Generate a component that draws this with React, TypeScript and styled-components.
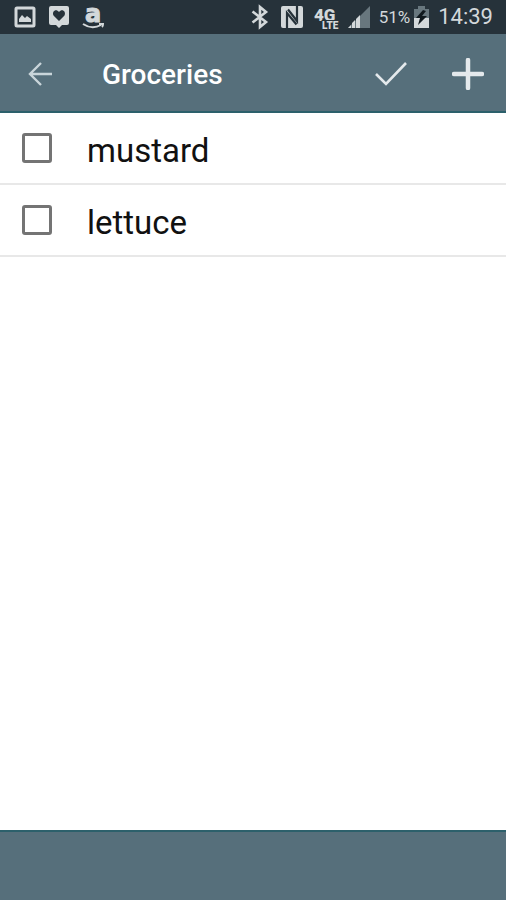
import React from 'react';
import styled, { createGlobalStyle } from 'styled-components';

const GlobalStyle = createGlobalStyle`
  * { box-sizing: border-box; }
  body { margin: 0; background: #fff; font-family: Roboto, "Liberation Sans", sans-serif; }
`;

const Screen = styled.div`
  display: flex;
  flex-direction: column;
  min-height: 100vh;
`;

const StatusBar = styled.div`
  display: flex;
  align-items: center;
  justify-content: space-between;
  height: 34px;
  padding: 0 13px 0 14px;
  background: #26323a;
  color: #d3d8da;
`;

const StatusGroup = styled.div<{ $gap: number }>`
  display: flex;
  align-items: center;
  gap: ${({ $gap }) => $gap}px;
`;

const StatusIcon = styled.svg`
  display: block;
  flex: none;
  overflow: visible;
`;

const Power = styled.div`
  display: flex;
  align-items: center;
  gap: 4px;
  font-size: 17px;
  line-height: 36px;
`;

const Clock = styled.time`
  font-size: 22px;
  line-height: 36px;
`;

const Toolbar = styled.header`
  display: flex;
  align-items: center;
  height: 79px;
  padding: 2px 14px 0 16px;
  background: #566f7b;
  border-bottom: 2px solid #2c606b;
`;

const IconButton = styled.button`
  display: grid;
  place-items: center;
  flex: none;
  width: 48px;
  height: 48px;
  padding: 0;
  border: 0;
  background: none;
  color: #e4e9ec;
  cursor: pointer;
`;

const Title = styled.h1`
  flex: 1;
  margin: 0 0 0 38px;
  padding-top: 2px;
  color: #fff;
  font-size: 28px;
  line-height: 36px;
  font-weight: 500;
`;

const Actions = styled.div`
  display: flex;
  gap: 29px;
`;

const Items = styled.ul`
  flex: 1;
  margin: 0;
  padding: 0;
  list-style: none;
  background: #fff;
`;

const Item = styled.li`
  height: 72px;
  border-bottom: 2px solid #e8e8e8;
`;

const ItemLabel = styled.label`
  display: flex;
  align-items: center;
  gap: 35px;
  height: 100%;
  padding: 0 22px;
  color: #111;
  font-size: 33px;
  line-height: 40px;
  cursor: pointer;
`;

const ItemText = styled.span`
  padding-top: 6px;
`;

const Checkbox = styled.input`
  appearance: none;
  flex: none;
  width: 30px;
  height: 30px;
  margin: 0;
  border: 3px solid #747474;
  border-radius: 3px;
  background: #fff;
  &:checked { background: #566f7b; }
`;

const Footer = styled.footer`
  height: 70px;
  background: #566f7b;
  border-top: 2px solid #2c606b;
`;

const items = ['mustard', 'lettuce'];

export default function App() {
  return (
    <>
      <GlobalStyle />
      <Screen>
        <StatusBar>
          <StatusGroup $gap={12}>
            <StatusIcon width="22" height="24" viewBox="0 0 22 24" aria-label="Picture">
              <rect x="2" y="3" width="18" height="18" rx="1" fill="none" stroke="currentColor" strokeWidth="3" />
              <path d="M5 17V14l3-4 3 3 2-2 4 3v3z" fill="currentColor" />
            </StatusIcon>
            <StatusIcon width="22" height="24" viewBox="0 0 22 24" aria-label="Favourite">
              <path d="M3 1h16a2 2 0 0 1 2 2v15a2 2 0 0 1-2 2h-5l-3 3-3-3H3a2 2 0 0 1-2-2V3a2 2 0 0 1 2-2z" fill="currentColor" />
              <path d="M11 16L5.500 10.500C3.500 6.500 8 3 11 7 14 3 18.500 6.500 16.500 10.500z" fill="#26323a" />
            </StatusIcon>
            <StatusIcon width="24" height="24" viewBox="0 0 24 24">
              <text x="11" y="17" textAnchor="middle" fontSize="24" fontWeight="700" fontFamily="DejaVu Sans" fill="currentColor" stroke="currentColor">a</text>
              <path d="M1 19q9 6 18 1M17 19h4q0 2-1 3" fill="none" stroke="currentColor" strokeWidth="2" />
            </StatusIcon>
          </StatusGroup>
          <StatusGroup $gap={9}>
            <StatusIcon width="22" height="24" viewBox="0 0 22 24" aria-label="Bluetooth">
              <path d="M3.500 6.500L17 17l-6 5V2l6 5L3.500 17.500" fill="none" stroke="currentColor" strokeWidth="2.600" />
            </StatusIcon>
            <StatusIcon width="24" height="24" viewBox="0 0 24 24" aria-label="NFC">
              <rect x="1" y="1" width="22" height="22" rx="2" fill="currentColor" />
              <path d="M7 23V8L16.500 19.500M17 1V16L8 4.500" fill="none" stroke="#26323a" strokeWidth="2.200" />
            </StatusIcon>
            <StatusIcon width="26" height="24" viewBox="0 0 26 24">
              <text x="1" y="16" fontSize="17" fontWeight="900" fontFamily="Roboto" fill="currentColor">4G</text>
              <text x="9" y="24" fontSize="10" fontWeight="900" fontFamily="Roboto" fill="currentColor" stroke="#26323a" strokeWidth="2" paintOrder="stroke">LTE</text>
            </StatusIcon>
            <StatusIcon width="22" height="24" viewBox="0 0 22 24" aria-label="Signal strength">
              <path d="M0 23L22 1v22z" fill="#68777e" />
              <path d="M0 23l3-3v3zM4 23v-5l3-3v8zM8 23v-9l4-4v13z" fill="currentColor" />
            </StatusIcon>
            <Power>
              <span>51%</span>
              <StatusIcon width="15" height="24" viewBox="0 0 15 24" aria-label="Battery charging">
                <path d="M0 4h4V1h7v3h4v19H0z" fill="#68777e" />
                <path d="M0 13h15v10H0z" fill="currentColor" />
                <path d="M9 5L2 13h4l-2 7 9-9H8l4-5z" fill="#10191e" />
              </StatusIcon>
            </Power>
            <Clock>14:39</Clock>
          </StatusGroup>
        </StatusBar>
        <Toolbar>
          <IconButton aria-label="Back">
            <svg width="24" height="24" viewBox="0 0 24 24" fill="none" stroke="#c9d5da" strokeWidth="2.400">
              <path d="M24 12H2M13 1L2 12l11 11" />
            </svg>
          </IconButton>
          <Title>Groceries</Title>
          <Actions>
            <IconButton aria-label="Done">
              <svg width="32" height="24" viewBox="0 0 32 24" fill="none" stroke="currentColor" strokeWidth="2.600">
                <path d="M1 12l10 10L31 1" />
              </svg>
            </IconButton>
            <IconButton aria-label="Add item">
              <svg width="32" height="32" viewBox="0 0 32 32" fill="none" stroke="currentColor" strokeWidth="4.500" strokeLinecap="round">
                <path d="M16 2v28M2 16h28" />
              </svg>
            </IconButton>
          </Actions>
        </Toolbar>
        <Items>
          {items.map((name) => (
            <Item key={name}>
              <ItemLabel>
                <Checkbox type="checkbox" />
                <ItemText>{name}</ItemText>
              </ItemLabel>
            </Item>
          ))}
        </Items>
        <Footer />
      </Screen>
    </>
  );
}
